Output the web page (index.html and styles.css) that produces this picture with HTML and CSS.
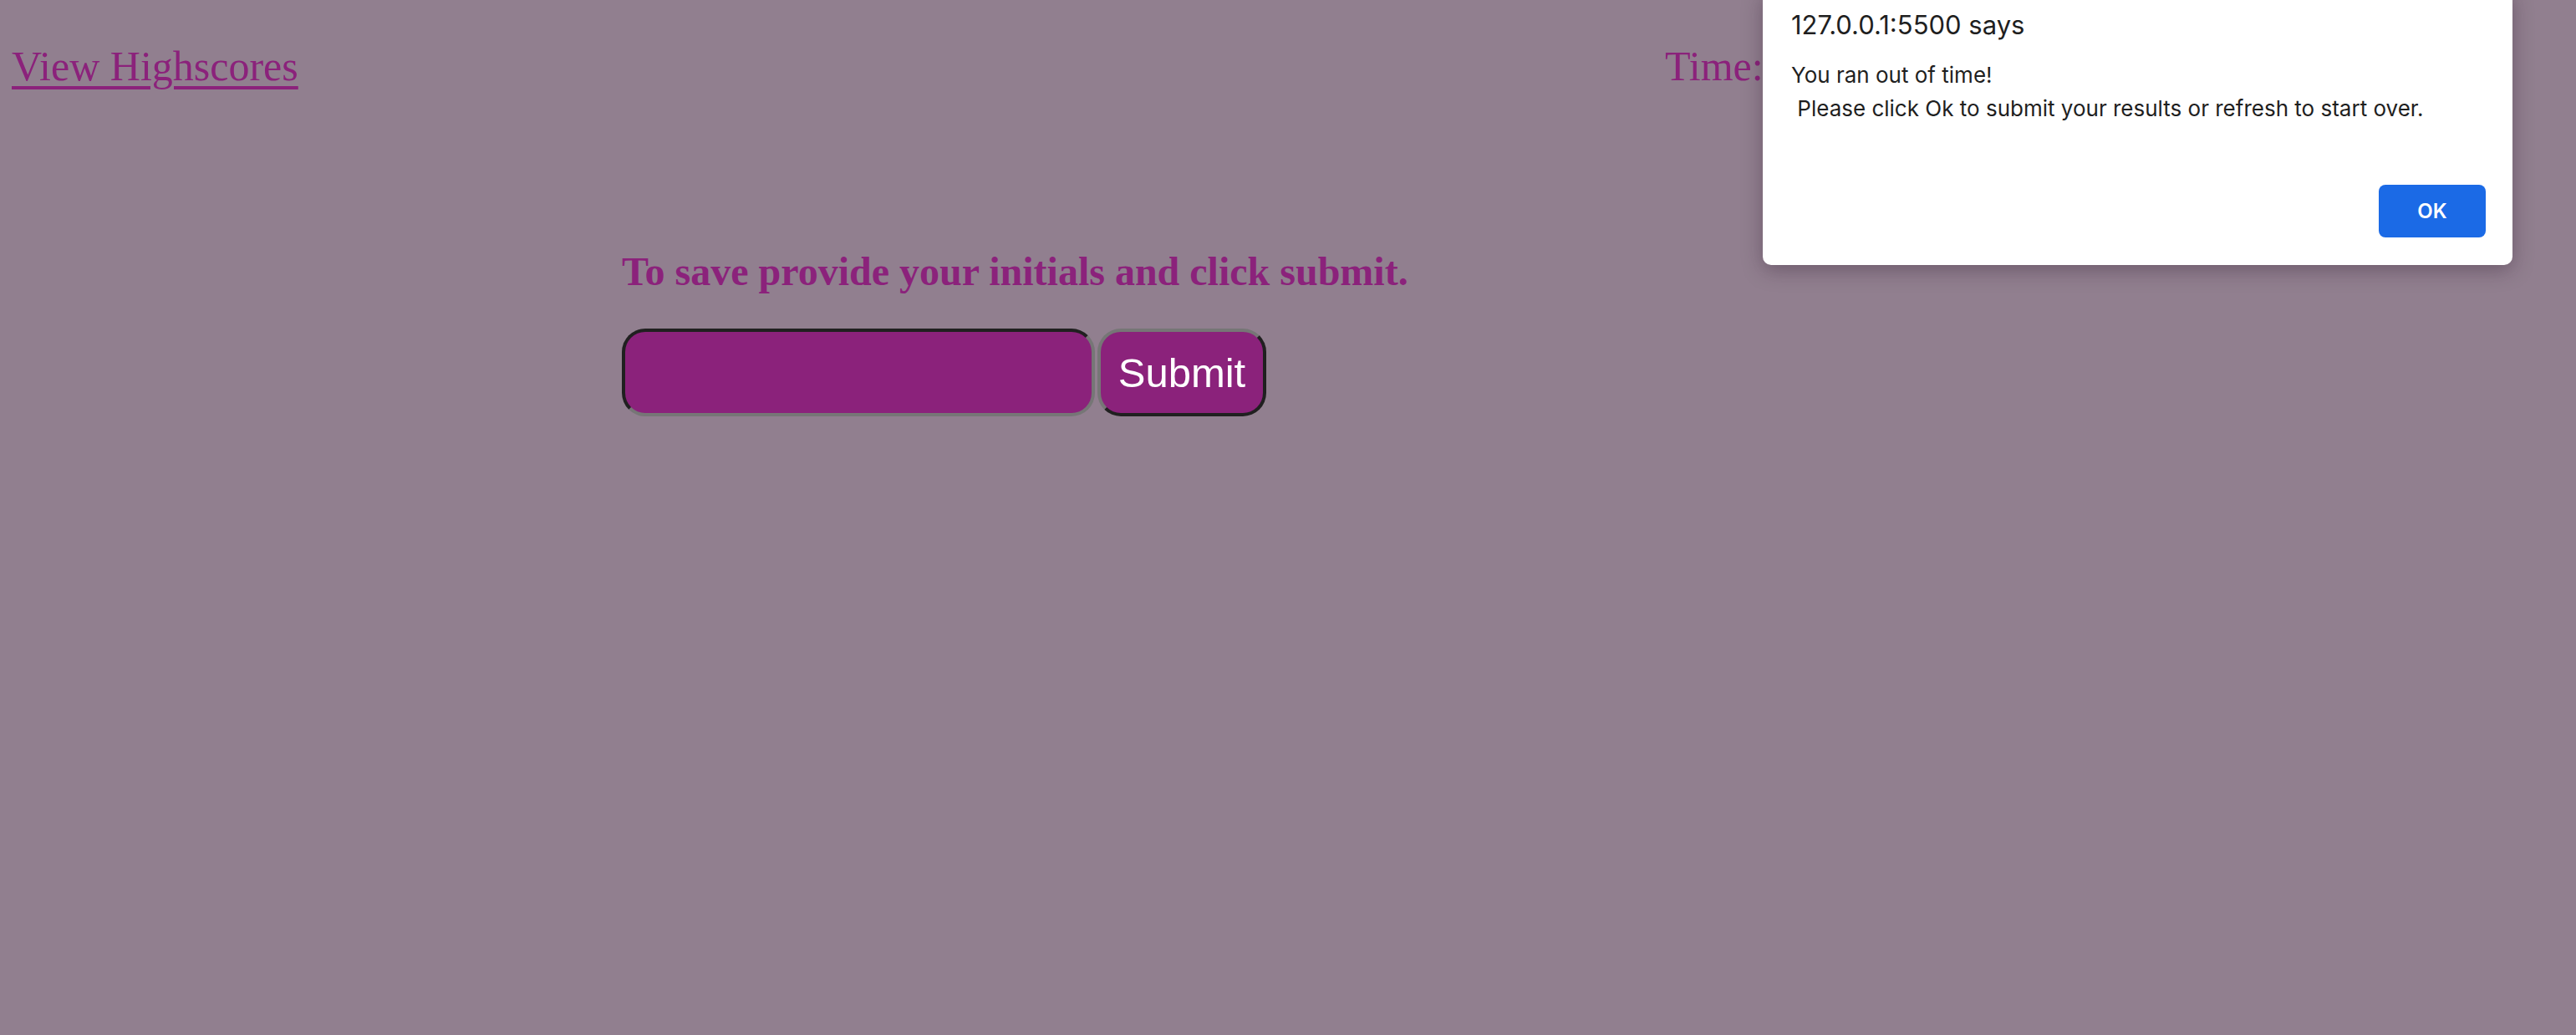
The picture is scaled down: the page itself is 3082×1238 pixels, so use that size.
FILE: index.html
```html
<!DOCTYPE html>
<html lang="en">
<head>
<meta charset="utf-8">
<title>Quiz</title>
<link rel="stylesheet" href="styles.css">
</head>
<body>
<header class="top-bar">
  <a class="hs-link" href="#">View Highscores</a>
  <span class="timer">Time: 0</span>
</header>
<main class="save-panel">
  <h3 class="save-title">To save provide your initials and click submit.</h3>
  <form class="save-form">
    <input class="initials" type="text" aria-label="Initials">
    <button class="submit-btn" type="button">Submit</button>
  </form>
</main>
<div class="alert-dialog" role="alertdialog">
  <div class="alert-title">127.0.0.1:5500 says</div>
  <div class="alert-msg">You ran out of time!<br>&nbsp;Please click Ok to submit your results or refresh to start over.</div>
  <div class="alert-actions">
    <button class="alert-ok" type="button">OK</button>
  </div>
</div>
</body>
</html>
```

FILE: styles.css
```css
html, body {
  margin: 0;
  padding: 0;
}

body {
  background: #917f8f;
  font-family: "Liberation Serif", "Times New Roman", serif;
  color: #8b227b;
  height: 1238px;
  overflow: hidden;
}

.top-bar {
  display: grid;
  grid-template-columns: 1978px auto;
  padding: 51px 0 0 14px;
  font-size: 50px;
  line-height: 56px;
}

.hs-link {
  color: #8b227b;
  text-decoration: underline;
  text-decoration-thickness: 4px;
  text-underline-offset: 7px;
  justify-self: start;
}

.timer {
  color: #8b227b;
}

.save-panel {
  padding-left: 744px;
}

.save-title {
  margin: 0;
  padding-top: 190px;
  font-size: 48px;
  line-height: 56px;
  font-weight: bold;
  color: #8b227b;
}

.save-form {
  display: flex;
  gap: 3px;
  margin-top: 40px;
}

.initials {
  box-sizing: border-box;
  width: 566px;
  height: 105px;
  margin: 0;
  padding: 0 20px;
  background: #8b227b;
  border: 4px solid;
  border-color: #202020 #767676 #767676 #202020;
  border-radius: 28px;
  outline: none;
  font-size: 40px;
  color: #fff;
}

.submit-btn {
  box-sizing: border-box;
  width: 202px;
  height: 105px;
  margin: 0;
  padding: 0;
  background: #8b227b;
  border: 4px solid;
  border-color: #767676 #202020 #202020 #767676;
  border-radius: 28px;
  font-family: "Liberation Sans", Arial, sans-serif;
  font-size: 49px;
  color: #fff;
}

.alert-dialog {
  position: absolute;
  top: -12px;
  right: 76px;
  width: 897px;
  box-sizing: border-box;
  padding: 22px 32px 33px 34px;
  background: #fff;
  border-radius: 10px;
  box-shadow: 0 6px 24px rgba(40, 20, 40, 0.35);
  font-family: Inter, "Noto Sans", sans-serif;
  color: #1f1f1f;
}

.alert-title {
  font-size: 31px;
  line-height: 40px;
}

.alert-msg {
  margin-top: 20px;
  font-size: 26px;
  line-height: 40px;
}

.alert-actions {
  display: flex;
  justify-content: flex-end;
  margin-top: 71px;
}

.alert-ok {
  width: 128px;
  height: 63px;
  border: none;
  border-radius: 8px;
  background: #1b6ae6;
  color: #fff;
  font-family: Inter, "Noto Sans", sans-serif;
  font-weight: 600;
  font-size: 24px;
}
```
